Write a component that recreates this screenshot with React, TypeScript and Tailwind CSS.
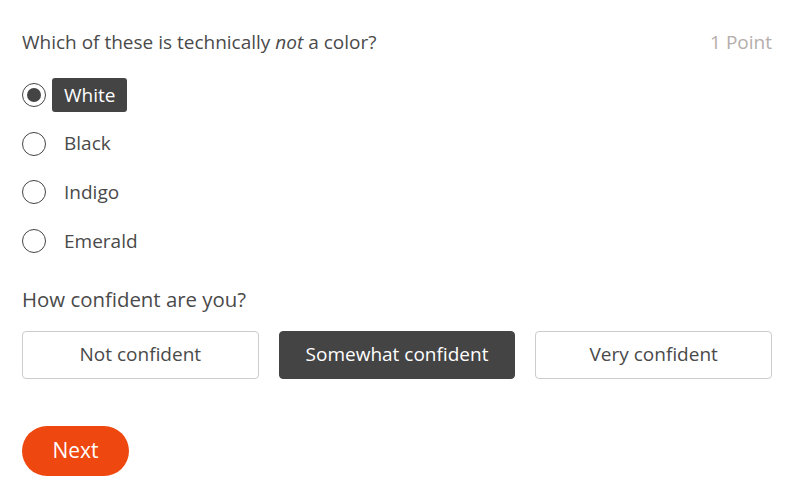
import { useState } from 'react';

const OPTIONS = ['White', 'Black', 'Indigo', 'Emerald'];
const CONFIDENCE = ['Not confident', 'Somewhat confident', 'Very confident'];

export default function App() {
  const [answer, setAnswer] = useState('White');
  const [confidence, setConfidence] = useState('Somewhat confident');

  return (
    <div className="h-screen overflow-hidden bg-white pl-[22px] pr-[18px] pt-[30px] text-[#4a4a4a] font-['Open_Sans',sans-serif]">
      <div className="flex items-center justify-between h-[24px]">
        <p className="text-[19px]">
          Which of these is technically <em>not</em> a color?
        </p>
        <span className="text-[19px] text-[#b5aeab]">1 Point</span>
      </div>

      <div className="mt-[24px] flex flex-col gap-[14.67px]">
        {OPTIONS.map((opt) => {
          const selected = opt === answer;
          return (
            <label
              key={opt}
              className="flex items-center gap-[6px] h-[34px] cursor-pointer"
              onClick={() => setAnswer(opt)}
            >
              <span className="w-[24px] h-[24px] rounded-full border-[1.5px] border-[#444] flex items-center justify-center">
                {selected && <span className="w-[14px] h-[14px] rounded-full bg-[#444]" />}
              </span>
              <span
                className={
                  selected
                    ? 'h-[34px] px-3 flex items-center rounded-[3px] bg-[#444] text-white text-[19px]'
                    : 'h-[34px] px-3 flex items-center text-[19px]'
                }
              >
                {opt}
              </span>
            </label>
          );
        })}
      </div>

      <p className="mt-[26px] text-[20.4px]">How confident are you?</p>

      <div className="mt-[16px] grid grid-cols-3 gap-[20px]">
        {CONFIDENCE.map((c) => {
          const selected = c === confidence;
          return (
            <button
              key={c}
              onClick={() => setConfidence(c)}
              className={
                selected
                  ? 'h-[48px] rounded-[4px] border border-[#444] bg-[#444] text-white text-[19px]'
                  : 'h-[48px] rounded-[4px] border border-[#ccc] bg-white text-[19px]'
              }
            >
              {c}
            </button>
          );
        })}
      </div>

      <button className="mt-[47px] h-[50px] w-[107px] rounded-full bg-[#ee4710] text-white text-[21px]">
        Next
      </button>
    </div>
  );
}
